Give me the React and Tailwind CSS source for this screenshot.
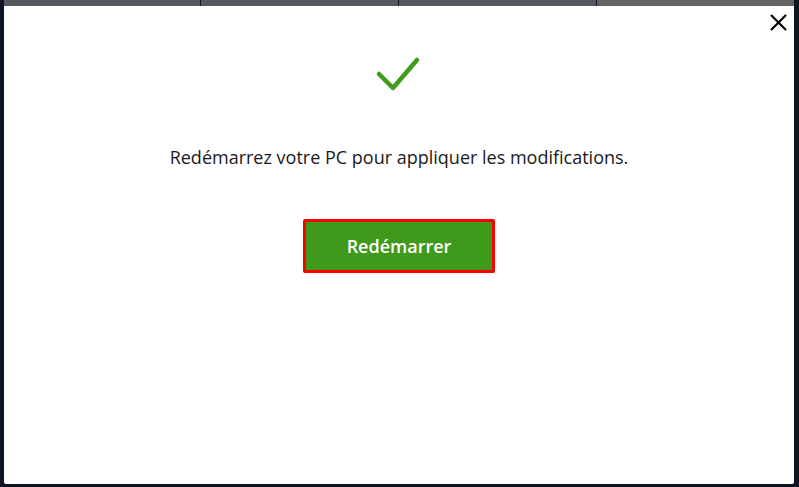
import React from 'react';

function TopStrip() {
    return (
        <div className="flex h-[6px] shrink-0">
            <div className="w-[196px] bg-[#55585e]" />
            <div className="w-px bg-[#0f1623]" />
            <div className="w-[197px] bg-[#55585e]" />
            <div className="w-px bg-[#0f1623]" />
            <div className="w-[197px] bg-[#55585e]" />
            <div className="w-px bg-[#0f1623]" />
            <div className="flex-1 bg-[#646464]" />
        </div>
    );
}

export default function App() {
    return (
        <div className="flex h-[487px] w-[799px] bg-[#0f1623] pr-[5px] pl-[4px] pb-[3px]" style={{ fontFamily: '"Open Sans", "Noto Sans", sans-serif' }}>
            <div className="flex flex-1 flex-col">
                <TopStrip />
                <div className="relative flex flex-1 flex-col items-center rounded-b-[2px] bg-white">
                    {/* close */}
                    <button className="absolute right-[2px] top-[3px] p-1 text-black">
                        <svg width="19" height="19" viewBox="0 0 19 19" fill="none" stroke="currentColor" strokeWidth="2.2">
                            <path d="M2 2L17 17M17 2L2 17" />
                        </svg>
                    </button>

                    <svg className="mt-[48px]" width="48" height="42" viewBox="0 0 48 42" fill="none" stroke="#3f9c1c" strokeWidth="4.5" strokeLinecap="round" strokeLinejoin="round">
                        <path d="M4 20L18 34L42 6" />
                    </svg>

                    <p className="mt-[49px] text-[18px] leading-[24px] text-[#1a1a1a]">
                        Redémarrez votre PC pour appliquer les modifications.
                    </p>

                    <div className="mt-[50px] rounded-[2px] border-[3px] border-[#ff0000]">
                        <button className="flex h-[48px] w-[186px] items-center justify-center bg-[#3f9a1c] text-[18px] font-semibold text-white">
                            Redémarrer
                        </button>
                    </div>
                </div>
            </div>
        </div>
    );
}
